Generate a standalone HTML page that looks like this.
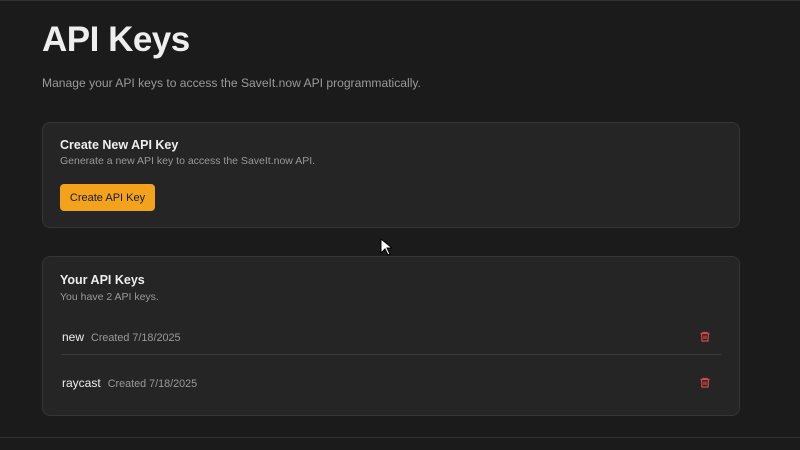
<!DOCTYPE html>
<html><head><style>
body{margin:0;width:800px;height:450px;background:#1b1b1b;font-family:"Liberation Sans",sans-serif;position:relative;overflow:hidden;color:#eee}
.top{position:absolute;left:0;top:0;width:800px;height:1px;background:#333}
.bot{position:absolute;left:0;top:437px;width:800px;height:1px;background:#333}
h1{position:absolute;left:42px;top:20px;margin:0;font-size:35px;font-weight:bold;color:#eee;letter-spacing:-0.5px}
.sub{position:absolute;left:42px;top:76px;font-size:12.1px;color:#9a9a9a}
.card{position:absolute;left:42px;width:696px;background:#252525;border:1px solid #353535;border-radius:8px}
.t{position:absolute;left:17px;font-size:12.5px;font-weight:bold;color:#eee}
.d{position:absolute;left:17px;font-size:10.5px;color:#999}
.btn{position:absolute;left:17px;top:61px;width:95px;height:27px;background:#f2a31b;border-radius:4px;color:#1a1a1a;font-size:11px;text-align:center;line-height:28px}
.row{position:absolute;left:19px;font-size:12px;color:#eee}
.row span{color:#999;font-size:10.8px;margin-left:7px}
.sep{position:absolute;left:18px;width:660px;height:1px;background:#3a3a3a;top:97px}
svg{position:absolute;left:656px}
</style></head><body>
<div class="top"></div>
<h1>API Keys</h1>
<div class="sub">Manage your API keys to access the SaveIt.now API programmatically.</div>
<div class="card" style="top:122px;height:104px">
<div class="t" style="top:15px">Create New API Key</div>
<div class="d" style="top:32px">Generate a new API key to access the SaveIt.now API.</div>
<div class="btn">Create API Key</div>
</div>
<div class="card" style="top:256px;height:158px">
<div class="t" style="top:16px">Your API Keys</div>
<div class="d" style="top:34px">You have 2 API keys.</div>
<div class="row" style="top:73px">new<span>Created 7/18/2025</span></div>
<div class="sep"></div>
<div class="row" style="top:119px">raycast<span>Created 7/18/2025</span></div>
<svg style="top:73px" width="12" height="13" viewBox="0 0 24 24" fill="none" stroke="#e04545" stroke-width="2.4"><path d="M3 6h18M8 6V4h8v2M5 6l1 15h12l1-15M10 10v7M14 10v7"/></svg>
<svg style="top:119px" width="12" height="13" viewBox="0 0 24 24" fill="none" stroke="#e04545" stroke-width="2.4"><path d="M3 6h18M8 6V4h8v2M5 6l1 15h12l1-15M10 10v7M14 10v7"/></svg>
</div>
<svg style="left:380px;top:238px" width="12" height="18" viewBox="0 0 12 18"><path d="M1 1v14l4-4 3 6 2-1-3-6h5z" fill="#fff" stroke="#000"/></svg>
<div class="bot"></div>
</body></html>
